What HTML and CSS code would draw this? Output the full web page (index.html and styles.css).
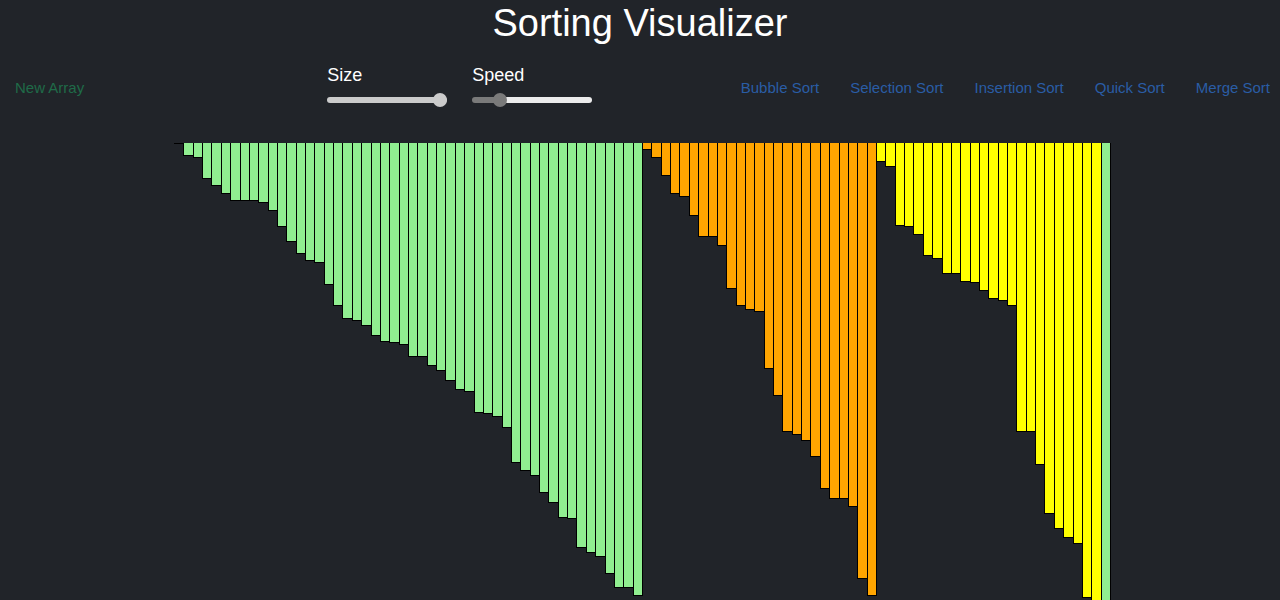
FILE: index.html
```html
<!DOCTYPE html>
<html lang="en">
<head>
    <meta charset="UTF-8">
    <meta name="viewport" content="width=device-width, initial-scale=1.0">
    <title>Sorting Visualizer</title>
    <link rel="stylesheet" href="styles.css">
</head>
<body>
    <h1 class="title">Sorting Visualizer</h1>

    <div class="controls">
        <button class="btn new-array">New Array</button>

        <div class="sliders">
            <label class="slider">
                <span>Size</span>
                <input type="range" class="size-range" min="10" max="100" value="100">
            </label>
            <label class="slider">
                <span>Speed</span>
                <input type="range" class="speed-range" min="0" max="100" value="20">
            </label>
        </div>

        <div class="algos">
            <button class="btn algo">Bubble Sort</button>
            <button class="btn algo">Selection Sort</button>
            <button class="btn algo">Insertion Sort</button>
            <button class="btn algo">Quick Sort</button>
            <button class="btn algo">Merge Sort</button>
        </div>
    </div>

    <div class="bars" id="bars"></div>

    <script>
        // snapshot of a merge sort half way through
        const heights = [
            0, 12, 14, 35, 42, 50, 57, 57, 57, 59, 67, 83, 98, 110, 117, 119, 141, 162, 175, 177,
            182, 192, 198, 199, 201, 213, 213, 222, 227, 237, 246, 248, 269, 270, 273, 284, 319, 327, 332, 349,
            359, 374, 375, 404, 409, 413, 430, 444, 444, 452,
            6, 14, 32, 50, 53, 72, 93, 93, 102, 145, 162, 166, 168, 225, 252, 288, 291, 297, 313, 345,
            355, 355, 363, 435, 452,
            18, 23, 82, 83, 91, 112, 115, 130, 130, 138, 139, 147, 155, 157, 162, 288, 288, 321, 370, 385,
            394, 400, 454, 480, 490
        ];

        const barsDiv = document.getElementById('bars');
        heights.forEach((h, i) => {
            const bar = document.createElement('div');
            let state = 'sorted';
            if (i >= 50 && i < 75) state = 'left';
            else if (i >= 75 && i < 99) state = 'right';
            bar.className = `bar ${state}`;
            bar.style.height = (h + 1) + 'px';
            barsDiv.appendChild(bar);
        });
    </script>
</body>
</html>
```

FILE: styles.css
```css
body {
    margin: 0;
    background: #212429;
    color: white;
    font-family: "Liberation Sans", Arial, sans-serif;
    overflow: hidden;
}
.title {
    margin: 0;
    font-size: 38px;
    font-weight: normal;
    line-height: 46px;
    text-align: center;
}
.controls {
    display: flex;
    align-items: center;
    height: 50px;
    margin-top: 16px;
    padding: 0 10px 0 15px;
}
.btn {
    background: none;
    border: none;
    padding: 0;
    font-family: inherit;
    font-size: 15px;
    cursor: pointer;
}
.new-array {
    color: #1f6b48;
}
.sliders {
    display: flex;
    gap: 25px;
    margin: 0 0 2px 243px;
}
.slider {
    display: flex;
    flex-direction: column;
    gap: 8px;
    font-size: 18px;
    line-height: 20px;
}
.slider input {
    -webkit-appearance: none;
    appearance: none;
    width: 120px;
    height: 6px;
    margin: 4px 0;
    border-radius: 3px;
    outline: none;
}
.slider input::-webkit-slider-thumb {
    -webkit-appearance: none;
    width: 14px;
    height: 14px;
    border-radius: 50%;
    cursor: pointer;
}
.size-range {
    background: #cbcbcb;
}
.size-range::-webkit-slider-thumb {
    background: #cbcbcb;
}
.speed-range {
    background: linear-gradient(to right, #7a7a7a 23%, #ececec 23%);
}
.speed-range::-webkit-slider-thumb {
    background: #7a7a7a;
}
.algos {
    display: flex;
    gap: 31px;
    margin-left: auto;
}
.algo {
    color: #2a5da5;
}
.bars {
    display: grid;
    grid-template-columns: repeat(100, 1fr);
    align-items: start;
    width: 936px;
    margin: 31px 0 0 174px;
}
.bar {
    box-sizing: border-box;
    border: 1px solid #000;
    border-top: none;
    margin-right: -1px;
}
.sorted {
    background: #90ee90;
}
.left {
    background: #ffa500;
}
.right {
    background: #ffff00;
}
```
